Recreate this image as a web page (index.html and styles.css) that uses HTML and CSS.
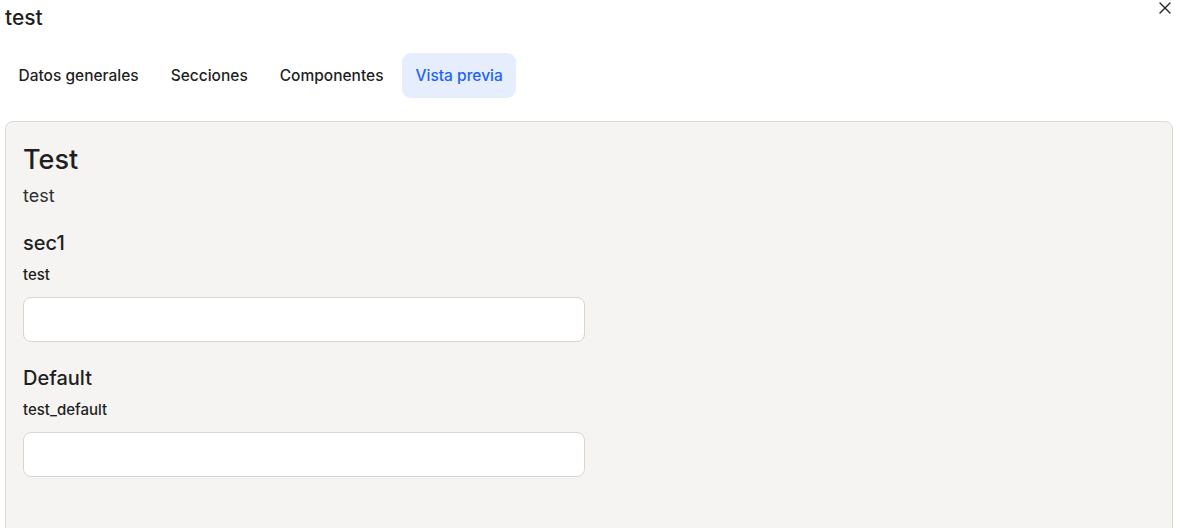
FILE: index.html
```html
<!DOCTYPE html>
<html lang="es">
<head>
<meta charset="utf-8">
<title>test</title>
<link rel="stylesheet" href="styles.css">
</head>
<body>
<div class="modal">
  <header class="modal-header">
    <h1 class="modal-title">test</h1>
    <button class="close-btn" aria-label="Cerrar">
      <svg width="12" height="12" viewBox="0 0 12 12"><path d="M1 1L11 11M11 1L1 11" stroke="#222" stroke-width="1.4" stroke-linecap="round"/></svg>
    </button>
  </header>
  <nav class="tabs">
    <span class="tab">Datos generales</span>
    <span class="tab">Secciones</span>
    <span class="tab">Componentes</span>
    <span class="tab active">Vista previa</span>
  </nav>
  <section class="preview">
    <h2 class="form-title">Test</h2>
    <p class="form-desc">test</p>
    <div class="section">
      <h3 class="section-title">sec1</h3>
      <label class="field-label">test</label>
      <input class="field-input" type="text">
    </div>
    <div class="section">
      <h3 class="section-title">Default</h3>
      <label class="field-label">test_default</label>
      <input class="field-input" type="text">
    </div>
  </section>
</div>
</body>
</html>
```
FILE: styles.css
```css
* { box-sizing: border-box; }
html, body { margin: 0; padding: 0; background: #fff; }
body {
  font-family: Inter, "Noto Sans", sans-serif;
  color: #1f1f1f;
  overflow: hidden;
}
.modal {
  padding: 0 18px 0 5px;
}
.modal-header {
  display: flex;
  justify-content: space-between;
  align-items: flex-start;
  height: 53px;
}
.modal-title {
  margin: 6px 0 0;
  font-size: 21px;
  line-height: 24px;
  font-weight: 500;
  color: #1f1f1f;
}
.close-btn {
  background: none;
  border: 0;
  padding: 0;
  margin: 2px 2px 0 0;
  width: 12px;
  height: 12px;
  display: flex;
  cursor: pointer;
}
.tabs {
  display: flex;
  gap: 5px;
  height: 45px;
}
.tab {
  display: flex;
  align-items: center;
  padding: 0 13.5px;
  font-size: 15.5px;
  font-weight: 500;
  color: #1f1f1f;
  border-radius: 9px;
}
.tab.active {
  background: #e6eefd;
  color: #1f63f5;
}
.preview {
  margin-top: 23px;
  background: #f5f4f2;
  border: 1px solid #dcd9d4;
  border-radius: 8px;
  padding: 21px 17px 40px;
  height: 420px;
}
.form-title {
  margin: 0;
  font-size: 27px;
  line-height: 34px;
  font-weight: 500;
}
.form-desc {
  margin: 7px 0 0;
  font-size: 18px;
  line-height: 24px;
  font-weight: 400;
  color: #2e2e2e;
}
.section {
  display: flex;
  flex-direction: column;
  width: 562px;
}
.section-title {
  margin: 22px 0 0;
  font-size: 20px;
  line-height: 26px;
  font-weight: 500;
}
.section + .section .section-title {
  margin-top: 23px;
}
.field-label {
  margin-top: 9px;
  font-size: 15px;
  line-height: 20px;
  font-weight: 500;
}
.field-input {
  margin-top: 12px;
  height: 45px;
  width: 100%;
  background: #fff;
  border: 1px solid #d9d6d1;
  border-radius: 8px;
  font: inherit;
  padding: 0 12px;
}
```
